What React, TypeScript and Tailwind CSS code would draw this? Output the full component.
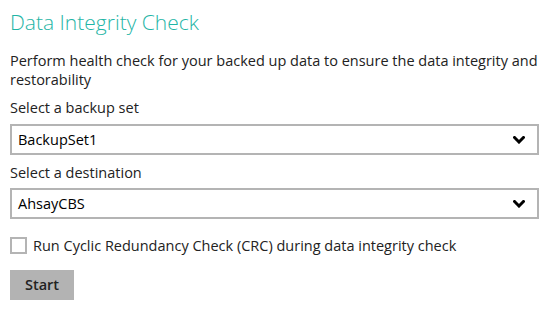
import { useState } from "react";

function Chevron() {
  return (
    <svg width="12" height="8" viewBox="0 0 12 8" className="shrink-0">
      <path d="M1.5 1.5 L6 6 L10.5 1.5" fill="none" stroke="#000" strokeWidth={3} strokeLinecap="square" />
    </svg>
  );
}

function SelectBox({ value }: { value: string }) {
  return (
    <div className="flex h-[31px] items-center justify-between border-2 border-[#b4b4b4] bg-white pl-[6px] pr-[12px] text-[14.5px] text-[#000]">
      <span>{value}</span>
      <Chevron />
    </div>
  );
}

export default function App() {
  const [crc, setCrc] = useState(false);

  return (
    <div
      className="h-[313px] w-[549px] bg-white px-[10px] pt-[7px] text-[#222]"
      style={{ fontFamily: '"Open Sans", sans-serif' }}
    >
      <h1 className="text-[21px] font-light leading-[30px] text-[#1fb5a6]">Data Integrity Check</h1>

      <p className="mt-[14px] text-[14.5px] leading-[19px]">
        Perform health check for your backed up data to ensure the data integrity and restorability
      </p>

      <div className="mt-[9px] text-[14.5px] leading-[19px]">Select a backup set</div>
      <div className="mt-[7px]">
        <SelectBox value="BackupSet1" />
      </div>

      <div className="mt-[8px] text-[14.5px] leading-[19px]">Select a destination</div>
      <div className="mt-[6px]">
        <SelectBox value="AhsayCBS" />
      </div>

      <label className="mt-[17px] flex cursor-pointer items-center gap-[6px] text-[14.5px] leading-[19px]">
        <span
          onClick={() => setCrc(!crc)}
          className="flex h-[17px] w-[17px] items-center justify-center border-2 border-[#b4b4b4] bg-white text-[11px]"
        >
          {crc ? "✓" : ""}
        </span>
        Run Cyclic Redundancy Check (CRC) during data integrity check
      </label>

      <button className="mt-[15px] h-[30px] w-[64px] bg-[#b3b3b3] text-[14.5px] font-semibold text-[#222]">
        Start
      </button>
    </div>
  );
}
